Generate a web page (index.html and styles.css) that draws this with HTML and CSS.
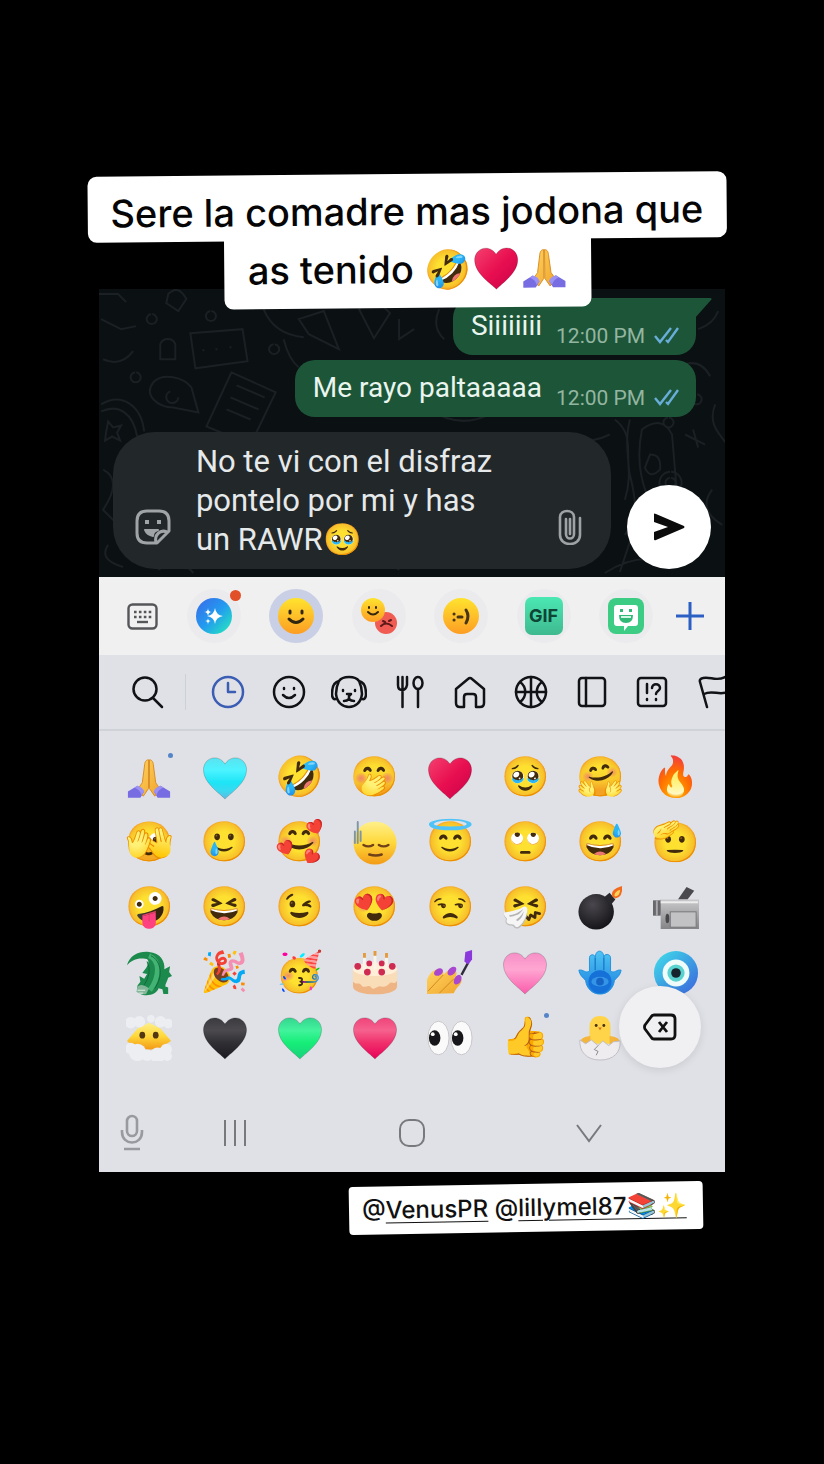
FILE: index.html
```
<!DOCTYPE html>
<html lang="es">
<head>
  <meta charset="utf-8">
  <meta name="viewport" content="width=device-width, initial-scale=1">
  <title>Sere la comadre mas jodona</title>
  <link rel="stylesheet" href="styles.css">
</head>
<body>
  <!-- shared shapes and colours -->
  <svg class="defs" aria-hidden="true">
    <defs>
      <linearGradient id="red" x2="1" y2="1"><stop offset="0" stop-color="#f5406f"/><stop offset=".5" stop-color="#e80f50"/><stop offset="1" stop-color="#c9004a"/></linearGradient>
      <linearGradient id="rose" x2="0" y2="1"><stop offset="0" stop-color="#f0447a"/><stop offset=".3" stop-color="#f5628e"/><stop offset=".6" stop-color="#f0306c"/><stop offset="1" stop-color="#e80058"/></linearGradient>
      <linearGradient id="cyan" x2="0" y2="1"><stop offset="0" stop-color="#5ae2f0"/><stop offset=".3" stop-color="#4cf3ff"/><stop offset=".6" stop-color="#1de4f6"/><stop offset=".8" stop-color="#3ad9f0"/><stop offset="1" stop-color="#5fb9e0"/></linearGradient>
      <linearGradient id="pink" x2="0" y2="1"><stop offset="0" stop-color="#f58fc6"/><stop offset=".4" stop-color="#ffa6d2"/><stop offset="1" stop-color="#f95bab"/></linearGradient>
      <linearGradient id="green" x2="0" y2="1"><stop offset="0" stop-color="#35d590"/><stop offset=".3" stop-color="#42f39c"/><stop offset=".6" stop-color="#16ee78"/><stop offset="1" stop-color="#19d07c"/></linearGradient>
      <linearGradient id="black" x2="0" y2="1"><stop offset="0" stop-color="#3b3a3f"/><stop offset=".3" stop-color="#4c4a4e"/><stop offset=".6" stop-color="#302f34"/><stop offset="1" stop-color="#1b1a20"/></linearGradient>
      <linearGradient id="face" x2="0" y2="1"><stop offset="0" stop-color="#fff08a"/><stop offset=".5" stop-color="#ffd83a"/><stop offset="1" stop-color="#f39a16"/></linearGradient>
      <linearGradient id="tabface" x2="0" y2="1"><stop offset="0" stop-color="#ffe32e"/><stop offset="1" stop-color="#fd9d24"/></linearGradient>
      <linearGradient id="skin" x2="1" y2="1"><stop offset="0" stop-color="#ffd45f"/><stop offset="1" stop-color="#f0a52c"/></linearGradient>
      <linearGradient id="ai" x2="1" y2="1"><stop offset="0" stop-color="#3a68e8"/><stop offset=".5" stop-color="#239bf0"/><stop offset="1" stop-color="#25f0b8"/></linearGradient>
      <linearGradient id="metal" x2="0" y2="1"><stop offset="0" stop-color="#c9c9cb"/><stop offset="1" stop-color="#858588"/></linearGradient>
      <linearGradient id="eye" x2="1" y2="1"><stop offset="0" stop-color="#3fe0ea"/><stop offset="1" stop-color="#3b62dc"/></linearGradient>
      <linearGradient id="hand" x2="0" y2="1"><stop offset="0" stop-color="#4fc4f2"/><stop offset="1" stop-color="#1b7fe0"/></linearGradient>
      <radialGradient id="ball" cx=".4" cy=".3" r=".7"><stop offset="0" stop-color="#4a484e"/><stop offset="1" stop-color="#161519"/></radialGradient>
    </defs>
    <symbol id="heart" viewBox="0 0 48 48">
      <path d="M24 46C20 41 1.500 30 1.500 15.500 1.500 8 7 3 13 3c5 0 8.500 2.500 11 6.500C26.500 5.500 30 3 35 3c6 0 11.500 5 11.500 12.500C46.500 30 28 41 24 46Z" stroke="#00000030"/>
    </symbol>
    <symbol id="pray" viewBox="0 0 48 48">
      <path d="M23.500 5c-3 0-4 3-4.200 6.500L17 29l-5 7 6 7 5.500-8ZM24.500 5c3 0 4 3 4.200 6.500L31 29l5 7-6 7-5.500-8Z" fill="url(#skin)" stroke="#d98c22"/>
      <path d="M12 32 2 38v6.500h13L19 38ZM36 32l10 6v6.500H33L29 38Z" fill="#776ce2"/>
      <path d="M12 32c4 1 6 3 7 6l-3 4c-1-4-3-6-7-8ZM36 32c-4 1-6 3-7 6l3 4c1-4 3-6 7-8Z" fill="#9b91f4"/>
    </symbol>
    <symbol id="ticks" viewBox="0 0 27 18">
      <path d="m2 10 5 6L18 2M13 14l2 2L25 2" fill="none" stroke="#68aed8" stroke-width="2.400"/>
    </symbol>
  </svg>

  <main>
    <h1 class="caption">
      <span class="caption-top">Sere la comadre mas jodona que</span>
      <span class="caption-bottom">as tenido 🤣<svg class="inline-emoji" role="img" aria-label="corazón"><use href="#heart" fill="url(#red)"/></svg><svg class="inline-emoji" role="img" aria-label="gracias"><use href="#pray"/></svg></span>
    </h1>

    <div class="phone">
      <section class="chat">
        <svg class="doodles" viewBox="0 0 626 287" preserveAspectRatio="xMidYMid slice" aria-hidden="true">
          <path d="M92 44l52-4 5 32-52 7zM104 61h2M117 60h2M131 58h2M55 93c10-10 30-5 38 5l7 25-25-5c-15 0-30-12-20-25ZM72 102a6 6 0 1 0 8 6M133 83l44 20-25 52-44-18zM138 96l28 12M132 108l28 12M128 120l24 10M3 115c20-12 40 0 43 27M3 122c18-8 32 2 36 25M10 132l5 6 8-2-4 7 3 8-8-4-7 4 1-8ZM3 30l20 10 15-3M5 70q18 8 30-8M62 70v-15a8 8 0 0 1 15 0v15ZM70 5q10-10 18 5l-8 12-12-8ZM112 22a5 5 0 1 0 1 0M175 55a5 5 0 1 0 1 0M37 83a5 5 0 1 0 1 0M53 25a5 5 0 1 0 1 0M165 20q10 25 40 28M185 50q5 20 15 28M200 30l25-8 15 38-30-15zM260 20l14-12 17 16-16 25zM300 30v20l15-10M340 20q-8 18 5 30M5 180q20 10 0 40l20 20M10 255q-10 15 15 22M60 280q20-15 35 3M250 275q25-20 50 5M160 170q30-20 50 10"/>
          <path d="M515 130c20 15 10 35 15 55s10 40-5 60M530 130c-8 30 5 50-5 80M542 140q20-15 30 5l5 60q-18 20-30 0-12-30-5-65ZM550 165q12 0 10 15-10 10-15-2ZM585 145l20 10M593 140l5 18M615 115c-8 20 5 30 12 40M570 182a11 11 0 1 0 1 0M570 188a5 5 0 1 0 1 0M598 40q15-5 20-18M585 75q16-5 25 12M596 105a5 5 0 1 0 1 0M568 128a5 5 0 1 0 1 0M530 252l-10 30M505 283q40-25 70-5M420 145q60 15 90 0M0 5h20l8 8M330 120q30 20 60 5M612 200q-15 20 10 35"/>
        </svg>

        <div class="bubble first">
          <p>Siiiiiiii</p>
          <time datetime="12:00">12:00 PM</time>
          <svg class="ticks" role="img" aria-label="Leído"><use href="#ticks"/></svg>
          <svg class="tail" viewBox="0 0 17 20" aria-hidden="true"><path d="M0 0h15c2 0 2 1 1 2L0 20Z" fill="#1d5538"/></svg>
        </div>
        <div class="bubble">
          <p>Me rayo paltaaaaa</p>
          <time datetime="12:00">12:00 PM</time>
          <svg class="ticks" role="img" aria-label="Leído"><use href="#ticks"/></svg>
        </div>

        <form class="composer">
          <div class="message-box">
            <button type="button" aria-label="Stickers">
              <svg width="36" height="36" viewBox="0 0 36 36" fill="none" stroke="#a0a4a6" stroke-width="3" stroke-linejoin="round">
                <path d="M12 2h12q10 0 10 10v10L22 34H12Q2 34 2 24V12Q2 2 12 2ZM32 23c-7-3-13 3-11 11"/>
                <path d="M10 21h13q-5 1-5 6-6-1-8-6Z" fill="#a0a4a6" stroke-width="2"/>
                <path d="M10 13h4M22 13h4" stroke-width="4"/>
              </svg>
            </button>
            <textarea rows="3" aria-label="Mensaje">No te vi con el disfraz
pontelo por mi y has
un RAWR🥹</textarea>
            <button type="button" aria-label="Adjuntar">
              <svg width="24" height="36" viewBox="0 0 24 36" fill="none" stroke="#9ea2a4" stroke-width="2.600" stroke-linecap="round">
                <path d="M22 9v17c0 12-20 12-20 0V8c0-8 14-8 14 0v17c0 6-8 6-8 0V10M12 10v15"/>
              </svg>
            </button>
          </div>
          <button class="send" type="submit" aria-label="Enviar">
            <svg width="32" height="28" viewBox="0 0 32 28"><path d="M1 1q0-1 2 0l28 12q1 1 0 2L3 27q-2 1-2-1v-7l14-5-14-5Z" fill="#0b0b0b"/></svg>
          </button>
        </form>
      </section>

      <section class="keyboard">
        <div class="toolbar">
          <button type="button" aria-label="Teclado">
            <svg width="31" height="27" viewBox="0 0 31 27" fill="none" stroke="#55565a" stroke-width="2.400">
              <rect x="1.500" y="1.500" width="28" height="24" rx="4"/>
              <path d="M7 9h18M7 14h18" stroke-dasharray="2.600 2.300"/><path d="M10 19h11"/>
            </svg>
          </button>
          <div class="tabs">
            <button class="tab" type="button" aria-label="Sugerencias">
              <svg width="38" height="38" viewBox="0 0 38 38">
                <circle cx="19" cy="19" r="18" fill="url(#ai)"/>
                <path d="M20 11q1 7 8 8-7 1-8 8-1-7-8-8 7-1 8-8ZM13 11q0 4 4 4-4 0-4 5 0-5-4-5 4 0 4-4ZM13 21q0 3 3 3-3 0-3 4 0-4-3-4 3 0 3-3Z" fill="#fff"/>
              </svg>
              <span class="alert"></span>
            </button>
            <button class="tab active" type="button" aria-label="Emojis">
              <svg width="38" height="38" viewBox="0 0 38 38">
                <circle cx="19" cy="19" r="18" fill="url(#tabface)"/>
                <path d="M13 14v2M25 14v2M12 22q7 7 14 0" fill="none" stroke="#332610" stroke-width="3" stroke-linecap="round"/>
              </svg>
            </button>
            <button class="tab" type="button" aria-label="Stickers">
              <svg width="38" height="38" viewBox="0 0 38 38" fill="none" stroke-linecap="round">
                <circle cx="26" cy="26" r="11" fill="#f05c54"/>
                <path d="M21 29q5-5 11 0M23 24l2 1M31 23l-2 1" stroke="#5d1818" stroke-width="2"/>
                <circle cx="13" cy="13" r="12" fill="url(#tabface)"/>
                <path d="M9 10v1M16 10v1M8 15q5 5 10 0" stroke="#332610" stroke-width="2"/>
              </svg>
            </button>
            <button class="tab" type="button" aria-label="Emoticonos">
              <svg width="38" height="38" viewBox="0 0 38 38" stroke-linecap="round">
                <circle cx="19" cy="19" r="18" fill="url(#tabface)"/>
                <path d="M12 17h.1M12 23h.1M16 20h4M24 13q4 6 0 13" fill="none" stroke="#4a3512" stroke-width="3"/>
              </svg>
            </button>
            <button class="tab" type="button"><span class="gif">GIF</span></button>
            <button class="tab" type="button" aria-label="Bitmoji">
              <svg width="38" height="38" viewBox="0 0 38 38">
                <rect x="1" y="1" width="36" height="36" rx="8" fill="#3dcc84"/>
                <path d="M10 8h18q3 0 3 3v15q0 3-3 3h-7l-4 5v-5h-7q-3 0-3-3V11q0-3 3-3Z" fill="#fff"/>
                <path d="M12 18h14q0 8-7 8t-7-8ZM13 12h3v3h-3zM22 12h3v3h-3z" fill="#32b976"/>
                <path d="M14 19h10v2H14z" fill="#d5f7e6"/>
              </svg>
            </button>
          </div>
          <button type="button" aria-label="Añadir">
            <svg width="28" height="28" viewBox="0 0 28 28" stroke="#2c5fc4" stroke-width="3"><path d="M14 0v28M0 14h28"/></svg>
          </button>
        </div>

        <div class="categories">
          <button class="search" type="button" aria-label="Buscar">
            <svg viewBox="0 0 36 36"><circle cx="16" cy="15" r="11.500"/><path d="m24 24 9 9"/></svg>
          </button>
          <div class="category-list">
            <button class="current" type="button" aria-label="Recientes">
              <svg viewBox="0 0 36 36"><circle cx="18" cy="18" r="15"/><path d="M18 9v9h7"/></svg>
            </button>
            <button type="button" aria-label="Caras">
              <svg viewBox="0 0 36 36"><circle cx="18" cy="18" r="15"/><path d="M13 14v1M23 14v1M12 21q6 6 12 0"/></svg>
            </button>
            <button type="button" aria-label="Animales">
              <svg viewBox="0 0 36 36"><path d="M8 7C10 4 14 3 18 3s8 1 10 4c2 4 3 8 3 13-1 9-7 13-13 13S6 29 5 20C5 15 6 11 8 7ZM8 7c-5 1-7 7-7 13 0 4 2 6 4 5M28 7c5 1 7 7 7 13 0 4-2 6-4 5M12 16v1M24 16v1M16 20h4l-2 2v3M13 27q3 0 5-2 2 2 5 2"/></svg>
            </button>
            <button type="button" aria-label="Comida">
              <svg viewBox="0 0 36 36"><path d="M6 3v8q0 5 4 5t5-5V3M10.500 3v30M26 15v18"/><ellipse cx="26" cy="9" rx="4.500" ry="6"/></svg>
            </button>
            <button type="button" aria-label="Lugares">
              <svg viewBox="0 0 36 36"><path d="M4 15 16 5q2-2 4 0l12 10v14q0 4-4 4h-4V23q0-3-3-3h-6q-3 0-3 3v10H8q-4 0-4-4Z"/></svg>
            </button>
            <button type="button" aria-label="Actividades">
              <svg viewBox="0 0 36 36"><circle cx="18" cy="18" r="15"/><path d="M18 3v30M3 18h30M7 8c7 5 7 15 0 20M29 8c-7 5-7 15 0 20"/></svg>
            </button>
            <button type="button" aria-label="Objetos">
              <svg viewBox="0 0 36 36"><rect x="5" y="4" width="26" height="28" rx="3"/><path d="M12 4v28"/></svg>
            </button>
            <button type="button" aria-label="Símbolos">
              <svg viewBox="0 0 36 36"><rect x="4" y="4" width="28" height="28" rx="3"/><path d="M13 10v9M13 25v1M18 14c0-5 8-5 8 0 0 3-4 3-4 6M22 25v1"/></svg>
            </button>
            <button type="button" aria-label="Banderas">
              <svg viewBox="0 0 36 36"><path d="M12 33 5 8q-1-3 3-4c7-2 13 4 22-1 2 0 2 2 2 3l3 11c-10 6-17-2-26 3"/></svg>
            </button>
          </div>
        </div>

        <div class="emojis">
          <button type="button" aria-label="Gracias"><svg><use href="#pray"/></svg><span class="dot"></span></button>
          <button type="button" aria-label="Corazón celeste"><svg><use href="#heart" fill="url(#cyan)"/></svg></button>
          <button type="button">🤣</button>
          <button type="button">🤭</button>
          <button type="button" aria-label="Corazón rojo"><svg><use href="#heart" fill="url(#red)"/></svg></button>
          <button type="button">🥹</button>
          <button type="button">🤗</button>
          <button type="button">🔥</button>

          <button type="button">🫣</button>
          <button type="button">🥲</button>
          <button type="button">🥰</button>
          <button type="button" aria-label="Sudor frío">
            <svg viewBox="0 0 48 48" fill="none" stroke-linecap="round">
              <circle cx="24" cy="24" r="22.500" fill="url(#face)"/>
              <path d="M3 12v12M6 2v22M9 12v10" stroke="#8195a0" stroke-width="2"/>
              <path d="M12 26q5 3 10 0M28 26q5 3 10 0M18 36q7 2 13 0" stroke="#704019" stroke-width="2.500"/>
            </svg>
          </button>
          <button type="button">😇</button>
          <button type="button">🙄</button>
          <button type="button">😅</button>
          <button type="button">🫡</button>

          <button type="button">🤪</button>
          <button type="button">😆</button>
          <button type="button">😉</button>
          <button type="button">😍</button>
          <button type="button">😒</button>
          <button type="button">🤧</button>
          <button type="button" aria-label="Bomba">
            <svg viewBox="0 0 48 48">
              <circle cx="20" cy="28" r="18.500" fill="url(#ball)"/>
              <path d="m28 13 6-5 6 7-5 6Z" fill="#29282d"/>
              <path d="M37 12q-3-7 10-11 1 12-7 13Z" fill="#f26a1e"/><path d="M39 11q0-4 6-6 0 6-5 7Z" fill="#ffd25b"/>
            </svg>
          </button>
          <button type="button" aria-label="Cámara de video">
            <svg viewBox="0 0 48 48">
              <path d="m26 15 9-13 8 4-7 9Z" fill="#4a4a4e"/>
              <path d="M7 15h41v31H8V30H7Z" fill="url(#metal)"/>
              <path d="M0 16h8v16H0Z" fill="#68686c"/><path d="M3 16h2v16H3Z" fill="#aaaaad"/>
              <rect x="18" y="28" width="27" height="16" fill="#c2c2c5" stroke="#77777a"/>
              <path d="M8 18h39" stroke="#ededee" stroke-width="2"/><ellipse cx="15" cy="35" rx="2" ry="5" fill="#48484c"/>
            </svg>
          </button>

          <button type="button" aria-label="Cocodrilo">
            <svg viewBox="0 0 48 48">
              <path d="M1 16C4 5 14 1 24 2c12 1 17 10 16 18l6-3-1 6 3 4-4 2c-1 4-3 6-3 9l3 1v7h-5l-1-5-4-1c-2 6-9 8-16 7-5-1-7-5-6-10l3-4-1-6 5 3 3-5-5-1 3-4c4-5 5-11 0-11C12 8 6 10 1 16Z" fill="#1c8a4c"/>
              <path d="M24 6c12 5 11 22 1 36" fill="none" stroke="#43b374" stroke-width="5"/>
              <path d="M26 6c11 5 13 22 4 34M22 12q6 12-4 26" fill="none" stroke="#11693a"/>
              <path d="M12 38q4-4 12 2l-3 6q-8 1-10-3Z" fill="#84b79a"/>
              <path d="M12 42h8M13 45h5" stroke="#e3efe7"/>
            </svg>
          </button>
          <button type="button">🎉</button>
          <button type="button">🥳</button>
          <button type="button" aria-label="Pastel">
            <svg viewBox="0 0 48 48">
              <path d="M1 20v18c0 11 46 11 46 0V20Z" fill="#efb483"/>
              <path d="M1 20v13c4 4 6 0 9 4s7-2 10 2 6-2 10-1 6 0 9-3 5 2 8-3V20Z" fill="#f9dcb8"/>
              <ellipse cx="24" cy="20" rx="23" ry="7" fill="#ffefd8"/>
              <g fill="#cf2a51"><circle cx="6" cy="17" r="3.500"/><circle cx="16" cy="23" r="3.500"/><circle cx="31" cy="23" r="3.500"/><circle cx="42" cy="17" r="3.500"/><circle cx="31" cy="14" r="3"/><circle cx="18" cy="14" r="3"/></g>
              <path d="M13 8v12M24 6v14M36 8v12" stroke="#f9f3ea" stroke-width="3"/>
              <path d="M13 3v5M24 1v5M36 3v5" stroke="#e49a3f" stroke-width="3"/>
            </svg>
          </button>
          <button type="button" aria-label="Esmalte de uñas">
            <svg viewBox="0 0 48 48">
              <path d="M0 46V31c2-6 7-11 12-11 4 0 6 2 5 6 5-6 10-7 13-4 2 3 0 6-2 8 4-3 7-2 8 1 1 4-5 7-8 14Z" fill="url(#skin)"/>
              <path d="M1 43 17 26M13 45l15-15" stroke="#cf8624" fill="none"/>
              <g fill="#a947cf"><ellipse cx="12" cy="23" rx="5" ry="3.500" transform="rotate(-30 12 23)"/><ellipse cx="26" cy="22" rx="5.500" ry="3.500" transform="rotate(-45 26 22)"/><ellipse cx="32" cy="31" rx="3.500" ry="5.500" transform="rotate(30 32 31)"/></g>
              <path d="m36 26 7-13" stroke="#302a3d" stroke-width="2.500"/><path d="m40 2 7-2v10l-4 5-4-3Z" fill="#8b38dc"/>
            </svg>
          </button>
          <button type="button" aria-label="Corazón rosa"><svg><use href="#heart" fill="url(#pink)"/></svg></button>
          <button type="button" aria-label="Mano de Fátima">
            <svg viewBox="0 0 48 48">
              <path d="M13 22V8c0-4 6-4 6 0 0-9 9-9 9 0 0-5 7-4 7 0v14c4 3 6-2 11-1-1 6-4 7-7 11-1 8-7 14-15 14S10 40 9 32C6 28 3 27 2 21c5-1 7 4 11 1Z" fill="url(#hand)" stroke="#2490dc"/>
              <path d="M19 8v13M28 8v13" stroke="#1b7dcb" stroke-width="1.500"/>
              <circle cx="24" cy="33" r="12" fill="#1570d8"/><ellipse cx="24" cy="33" rx="9" ry="5" fill="#3495e6"/><circle cx="24" cy="33" r="4" fill="#1563c5"/>
            </svg>
          </button>
          <button type="button" aria-label="Ojo turco">
            <svg viewBox="0 0 48 48"><circle cx="24" cy="24" r="23" fill="url(#eye)"/><circle cx="24" cy="24" r="14" fill="#effcfa"/><circle cx="24" cy="24" r="9" fill="#5ad3d0"/><circle cx="24" cy="24" r="5" fill="#17242e"/></svg>
          </button>

          <button type="button" aria-label="Cara en las nubes">
            <svg viewBox="0 0 48 48">
              <path d="M1 27 12 14l12-6 12 6 11 13-14 9H12Z" fill="url(#face)"/>
              <g fill="#eceef2"><circle cx="5" cy="8" r="6"/><circle cx="14" cy="7" r="6"/><circle cx="26" cy="4" r="4"/><circle cx="36" cy="7" r="6"/><circle cx="44" cy="9" r="5"/><circle cx="5" cy="35" r="6"/><circle cx="12" cy="39" r="9"/><circle cx="22" cy="42" r="6"/><circle cx="33" cy="42" r="8"/><circle cx="42" cy="36" r="6"/><circle cx="43" cy="43" r="5"/></g>
              <ellipse cx="17" cy="21" rx="3" ry="3.500" fill="#523812"/><ellipse cx="31" cy="21" rx="3" ry="3.500" fill="#523812"/>
            </svg>
          </button>
          <button type="button" aria-label="Corazón negro"><svg><use href="#heart" fill="url(#black)"/></svg></button>
          <button type="button" aria-label="Corazón verde"><svg><use href="#heart" fill="url(#green)"/></svg></button>
          <button type="button" aria-label="Corazón"><svg><use href="#heart" fill="url(#rose)"/></svg></button>
          <button type="button" aria-label="Ojos">
            <svg viewBox="0 0 48 48"><g fill="#fafafa" stroke="#c9c4c8"><ellipse cx="12" cy="24" rx="11" ry="17.500"/><ellipse cx="36" cy="24" rx="11" ry="17.500"/></g><g fill="#17161a"><ellipse cx="8" cy="24" rx="6" ry="8"/><ellipse cx="32" cy="24" rx="6" ry="8"/></g><circle cx="6" cy="20" r="2" fill="#fff"/><circle cx="30" cy="20" r="2" fill="#fff"/></svg>
          </button>
          <button type="button">👍<span class="dot"></span></button>
          <button type="button" aria-label="Pollito">
            <svg viewBox="0 0 48 48">
              <path d="M13 30V13q0-12 11-12t11 12v17Z" fill="#ffd449"/>
              <path d="M3 29q0-6 11-7v10ZM45 29q0-6-11-7v10Z" fill="#f5b53a"/>
              <path d="M3 26l6 4 6-4 7 6 5-5 6 5 5-4 7-1c1 12-7 20-21 20S2 38 3 26Z" fill="#eeecef" stroke="#c0bdc2"/>
              <path d="m22 32-4 4 4 2-2 4" fill="none" stroke="#8b878e"/>
              <circle cx="20" cy="11" r="1.500" fill="#47300d"/><circle cx="28" cy="11" r="1.500" fill="#47300d"/><path d="M22 13h4l-2 3Z" fill="#d8741a"/>
            </svg>
          </button>
          <button type="button">🐻</button>
          <button class="backspace" type="button" aria-label="Borrar">
            <svg width="34" height="28" viewBox="0 0 34 28" fill="none" stroke="#111" stroke-width="2.800" stroke-linejoin="round"><path d="M11 2h17q4 0 4 4v16q0 4-4 4H11q-2 0-3-2l-6-8q-1-2 0-4l6-8q1-2 3-2Z"/><path d="m16 9 8 10M24 9l-8 10"/></svg>
          </button>
        </div>

        <nav class="navbar">
          <button type="button" aria-label="Dictar">
            <svg width="26" height="38" viewBox="0 0 26 38" fill="none" stroke="#989a9f" stroke-width="2.600"><rect x="8" y="2" width="10" height="20" rx="5"/><path d="M3 16v2c0 14 20 14 20 0v-2M5 35h16"/></svg>
          </button>
          <button type="button" aria-label="Aplicaciones recientes">
            <svg width="26" height="28" viewBox="0 0 26 28" stroke="#77797d" stroke-width="2"><path d="M3 1v26M13 1v26M23 1v26"/></svg>
          </button>
          <button type="button" aria-label="Inicio">
            <svg width="28" height="30" viewBox="0 0 28 30" fill="none" stroke="#77797d" stroke-width="2"><rect x="2" y="2" width="24" height="26" rx="9"/></svg>
          </button>
          <button type="button" aria-label="Ocultar teclado">
            <svg width="28" height="22" viewBox="0 0 28 22" fill="none" stroke="#77797d" stroke-width="2"><path d="m2 3 12 16L26 3"/></svg>
          </button>
        </nav>
      </section>
    </div>

    <p class="mentions">@<a href="#">VenusPR</a> @<a href="#">lillymel87📚✨</a></p>
  </main>
</body>
</html>
```
FILE: styles.css
```
* {
  box-sizing: border-box;
}

body {
  background: #000;
  font-family: Roboto, sans-serif;
  margin: 0;
}

main {
  padding: 174px 12% 80px;
}

button {
  display: flex;
  align-items: center;
  justify-content: center;
  padding: 0;
  border: none;
  background: none;
  font-family: inherit;
  cursor: pointer;
}

.defs {
  position: absolute;
  width: 0;
  height: 0;
}

/* caption over the top of the phone */
.caption {
  position: relative;
  z-index: 2;
  display: flex;
  flex-direction: column;
  align-items: center;
  margin: 0 -2px -19px -12px;
  font: 500 38px/58px Inter, sans-serif;
  white-space: nowrap;
  color: #050505;
  transform: rotate(-0.5deg);
}

.caption-top {
  padding: 8px 23px 0;
  border-radius: 9px;
  background: #fff;
}

.caption-bottom {
  display: flex;
  align-items: center;
  margin-top: -2px;
  padding: 2px 24px 10px;
  border-radius: 0 0 9px 9px;
  background: #fff;
}

.inline-emoji {
  width: 46px;
  height: 46px;
  margin-left: 2px;
}

/* chat */
.chat {
  position: relative;
  display: flex;
  flex-direction: column;
  align-items: flex-end;
  padding: 9px 14px 8px;
  background: #0b1013;
  overflow: hidden;
}

.doodles {
  position: absolute;
  inset: 0;
  width: 100%;
  height: 100%;
  fill: none;
  stroke: #1a2023;
  stroke-width: 2;
}

.bubble {
  position: relative;
  display: flex;
  align-items: flex-end;
  height: 57px;
  margin-right: 15px;
  padding: 0 16px 7px 18px;
  border-radius: 20px;
  background: #1d5538;
  color: #e9f5ee;
}

.bubble.first {
  margin-bottom: 5px;
  border-top-right-radius: 0;
}

.bubble p {
  margin: 0 14px 5px 0;
  font-size: 28px;
  line-height: 34px;
}

.bubble time {
  font-size: 21px;
  line-height: 24px;
  color: #93b5a1;
}

.ticks {
  width: 27px;
  height: 18px;
  margin: 0 0 4px 8px;
}

.tail {
  position: absolute;
  top: 0;
  left: calc(100% - 1px);
  width: 17px;
  height: 20px;
}

.composer {
  position: relative;
  display: flex;
  align-items: flex-end;
  gap: 16px;
  width: 100%;
  margin: 15px 0 0;
}

.message-box {
  display: flex;
  flex: 1;
  align-items: flex-end;
  padding: 10px 29px 10px 22px;
  border-radius: 42px;
  background: #22272a;
}

.message-box button {
  margin-bottom: 14px;
}

.message-box textarea {
  flex: 1;
  min-width: 0;
  height: 117px;
  margin-left: 25px;
  padding: 0;
  border: none;
  outline: none;
  resize: none;
  overflow: hidden;
  background: none;
  color: #e6e9ea;
  font: 31px/39px Roboto, sans-serif;
}

.send {
  width: 84px;
  height: 84px;
  border-radius: 50%;
  background: #fff;
}

/* keyboard */
.keyboard {
  background: #dfe1e6;
}

.toolbar {
  display: flex;
  align-items: center;
  height: 78px;
  padding: 0 8px 0 17px;
  background: #f0f0f1;
}

.toolbar > button {
  width: 54px;
  height: 54px;
}

.tabs {
  display: flex;
  flex: 1;
  justify-content: space-between;
  margin: 0 10px 0 17px;
}

.tab {
  position: relative;
  width: 54px;
  height: 54px;
  border-radius: 50%;
  background: #ebebed;
}

.tab.active {
  background: #c9cfe4;
}

.alert {
  position: absolute;
  top: 1px;
  right: 0;
  width: 11px;
  height: 11px;
  border-radius: 50%;
  background: #e2502a;
}

.gif {
  width: 38px;
  height: 38px;
  border-radius: 7px;
  background: linear-gradient(#4be8b4, #3fb98f);
  color: #0e4535;
  font: 700 18px/38px Inter, sans-serif;
}

.categories {
  display: flex;
  align-items: center;
  height: 76px;
  padding-left: 18px;
  border-bottom: 2px solid #cfd2d7;
  overflow: hidden;
}

.categories svg {
  width: 36px;
  height: 36px;
  fill: none;
  stroke: #111216;
  stroke-width: 2.5;
  stroke-linecap: round;
  stroke-linejoin: round;
}

.categories .search {
  width: 60px;
}

.category-list {
  display: flex;
  flex: 1;
  margin: 0 -18px 0 8px;
  padding-left: 12px;
  border-left: 1px solid #cdd0d6;
}

.category-list button {
  flex: 1;
}

.categories .current svg {
  stroke: #3b5db3;
}

.emojis {
  position: relative;
  display: grid;
  grid-template-columns: repeat(8, 1fr);
  padding: 14px 12px 0 13px;
}

.emojis button {
  position: relative;
  height: 65px;
  font-size: 39px;
  line-height: 65px;
}

.emojis svg {
  width: 46px;
  height: 46px;
}

.dot {
  position: absolute;
  top: 8px;
  left: calc(50% + 19px);
  width: 5px;
  height: 5px;
  border-radius: 50%;
  background: #5585c8;
}

.emojis .backspace {
  position: absolute;
  right: 24px;
  bottom: 2px;
  width: 82px;
  height: 82px;
  border-radius: 50%;
  background: #f0eff1;
  box-shadow: 0 2px 8px rgba(0, 0, 0, 0.1);
}

.emojis .backspace svg {
  width: 34px;
  height: 28px;
}

.navbar {
  display: grid;
  grid-template-columns: 66px 140px 1fr 140px 66px;
  align-items: center;
  height: 78px;
  margin-top: 24px;
}

/* mentions under the phone */
.mentions {
  width: fit-content;
  margin: 12px 23px 0 auto;
  padding: 0 16px 0 13px;
  border-radius: 4px;
  background: #fff;
  color: #111;
  font: 500 24px/48px Inter, sans-serif;
  white-space: nowrap;
  transform: rotate(-1deg);
}

.mentions a {
  color: inherit;
  text-underline-offset: 4px;
  text-decoration-thickness: 1px;
}
```
